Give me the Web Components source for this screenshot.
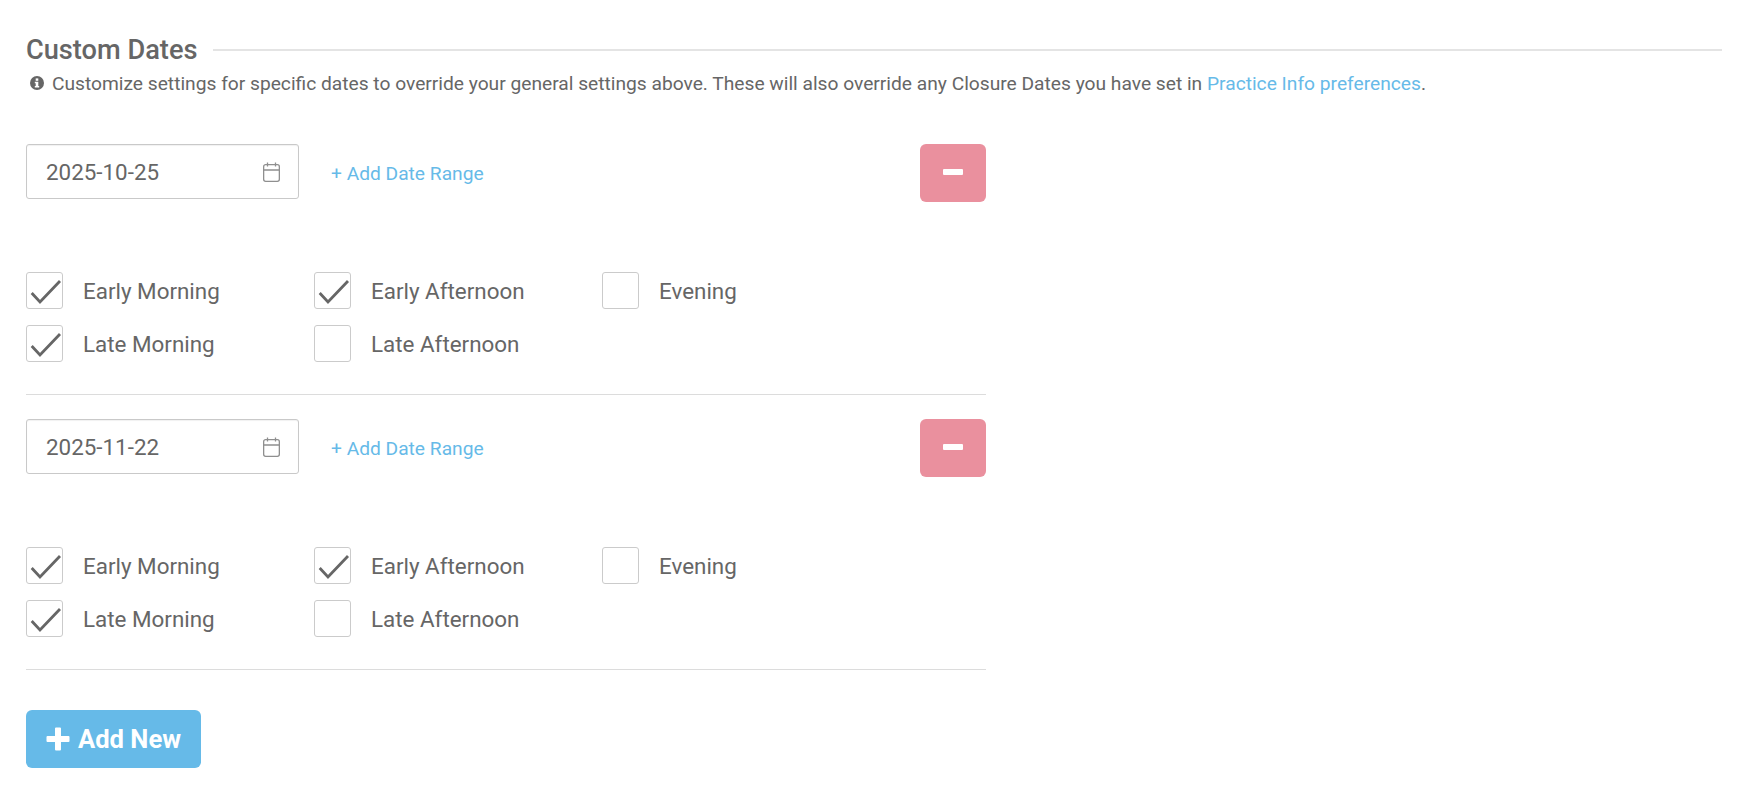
<!DOCTYPE html>
<html>
<head>
<meta charset="utf-8">
<style>
    html, body { margin: 0; background: #fff; }
    body { font-family: Roboto, "Liberation Sans", sans-serif; color: #666; }
</style>
</head>
<body>
<custom-dates>
    <date-entry date="2025-10-25" checked="early-morning,late-morning,early-afternoon"></date-entry>
    <date-entry date="2025-11-22" checked="early-morning,late-morning,early-afternoon"></date-entry>
</custom-dates>

<script>
class TimeCheck extends HTMLElement {
    constructor() {
        super();
        const shadow = this.attachShadow({ mode: 'open' });
        const tick = this.hasAttribute('checked')
            ? '<svg viewBox="0 0 37 37" width="37" height="37"><path d="M5.7 21 L14 30 L34 9" fill="none" stroke="#666" stroke-width="2.8"/></svg>'
            : '';
        shadow.innerHTML = `
            <style>
                :host { display: flex; align-items: center; gap: 20px; height: 37px; font-size: 22.4px; }
                .box {
                    box-sizing: border-box;
                    width: 37px;
                    height: 37px;
                    border: 1px solid #cbcbcb;
                    border-radius: 3px;
                    position: relative;
                    flex: none;
                }
                svg { position: absolute; left: -1px; top: -1px; }
            </style>
            <span class="box">${tick}</span>
            <span><slot></slot></span>
        `;
    }
}

class DateEntry extends HTMLElement {
    constructor() {
        super();
        const shadow = this.attachShadow({ mode: 'open' });
        const checked = (this.getAttribute('checked') || '').split(',');
        const item = (key, label) =>
            `<time-check ${checked.includes(key) ? 'checked' : ''}>${label}</time-check>`;
        shadow.innerHTML = `
            <style>
                :host {
                    display: block;
                    width: 960px;
                    height: 251px;
                    margin-bottom: 24px;
                    box-sizing: border-box;
                    border-bottom: 1px solid #dcdcdc;
                }
                .top { display: flex; align-items: flex-start; }
                .input {
                    box-sizing: border-box;
                    width: 273px;
                    height: 55px;
                    border: 1px solid #c9c9c9;
                    border-radius: 3px;
                    box-shadow: inset 0 1px 1px rgba(0,0,0,.06);
                    display: flex;
                    align-items: center;
                    justify-content: space-between;
                    padding: 0 18px 0 19px;
                    font-size: 22.4px;
                }
                .range { margin: 18px auto 0 32px; font-size: 19.2px; color: #66bae8; }
                .remove {
                    box-sizing: border-box;
                    width: 66px;
                    height: 58px;
                    padding-bottom: 2px;
                    border-radius: 6px;
                    background: #ea909e;
                    display: flex;
                    align-items: center;
                    justify-content: center;
                }
                .remove i { width: 20px; height: 6px; border-radius: 1px; background: #fff; }
                .grid {
                    display: grid;
                    grid-template-columns: repeat(3, 288px);
                    grid-auto-flow: column;
                    grid-template-rows: 37px 37px;
                    row-gap: 16px;
                    margin-top: 70px;
                }
            </style>
            <div class="top">
                <div class="input">
                    <span>${this.getAttribute('date')}</span>
                    <svg width="17" height="20" viewBox="0 0 17 20" fill="none" stroke="#8f8f8f" stroke-width="1.3">
                        <rect x="0.65" y="2.65" width="15.7" height="16.7" rx="2"/>
                        <path d="M0.65 8 H16.35 M4.5 0.5 V4.5 M12.5 0.5 V4.5"/>
                    </svg>
                </div>
                <span class="range">+ Add Date Range</span>
                <div class="remove"><i></i></div>
            </div>
            <div class="grid">
                ${item('early-morning', 'Early Morning')}
                ${item('late-morning', 'Late Morning')}
                ${item('early-afternoon', 'Early Afternoon')}
                ${item('late-afternoon', 'Late Afternoon')}
                ${item('evening', 'Evening')}
            </div>
        `;
    }
}

class SectionTitle extends HTMLElement {
    constructor() {
        super();
        this.attachShadow({ mode: 'open' }).innerHTML = `
            <style>
                :host { display: flex; align-items: center; gap: 16px; font-size: 27.2px; font-weight: 500; height: 28px; }
                i { flex: 1; height: 2px; background: #e4e4e4; }
            </style>
            <span><slot></slot></span><i></i>
        `;
    }
}

class AddButton extends HTMLElement {
    constructor() {
        super();
        this.attachShadow({ mode: 'open' }).innerHTML = `
            <style>
                :host {
                    display: inline-flex;
                    align-items: center;
                    gap: 8px;
                    height: 58px;
                    padding: 0 20px;
                    border-radius: 6px;
                    background: #66bae8;
                    color: #fff;
                    font-size: 25.6px;
                    font-weight: 700;
                }
                svg { display: block; }
            </style>
            <svg width="24" height="24" viewBox="0 0 24 24"><path d="M9 1.5 a1 1 0 0 1 1 -1 h4 a1 1 0 0 1 1 1 V9 h7.5 a1 1 0 0 1 1 1 v4 a1 1 0 0 1 -1 1 H15 v7.5 a1 1 0 0 1 -1 1 h-4 a1 1 0 0 1 -1 -1 V15 H1.5 a1 1 0 0 1 -1 -1 v-4 a1 1 0 0 1 1 -1 H9 Z" fill="#fff"/></svg>
            <span><slot></slot></span>
        `;
    }
}

class CustomDates extends HTMLElement {
    constructor() {
        super();
        this.attachShadow({ mode: 'open' }).innerHTML = `
            <style>
                :host { display: block; padding: 36px 20px 0 26px; }
                .note { display: flex; align-items: center; gap: 8px; margin-top: 6px; font-size: 19.2px; height: 26px; }
                .note a { color: #66bae8; text-decoration: none; }
                .note svg { margin: -1px 0 0 4px; flex: none; }
                .list { display: flex; flex-direction: column; margin-top: 48px; }
                add-button { margin-top: 16px; }
            </style>
            <section-title>Custom Dates</section-title>
            <div class="note">
                <svg width="14" height="14" viewBox="0 0 14 14">
                    <circle cx="7" cy="7" r="7" fill="#666"/>
                    <rect x="5.7" y="2.4" width="2.6" height="2.4" fill="#fff"/>
                    <path d="M4.8 5.8 H8.3 V10 H9.2 V11.4 H4.8 V10 H5.7 V7.2 H4.8 Z" fill="#fff"/>
                </svg>
                <span>Customize settings for specific dates to override your general settings above. These will also override any Closure Dates you have set in <a>Practice Info preferences</a>.</span>
            </div>
            <div class="list"><slot></slot></div>
            <add-button>Add New</add-button>
        `;
    }
}

customElements.define('time-check', TimeCheck);
customElements.define('date-entry', DateEntry);
customElements.define('section-title', SectionTitle);
customElements.define('add-button', AddButton);
customElements.define('custom-dates', CustomDates);
</script>
</body>
</html>
